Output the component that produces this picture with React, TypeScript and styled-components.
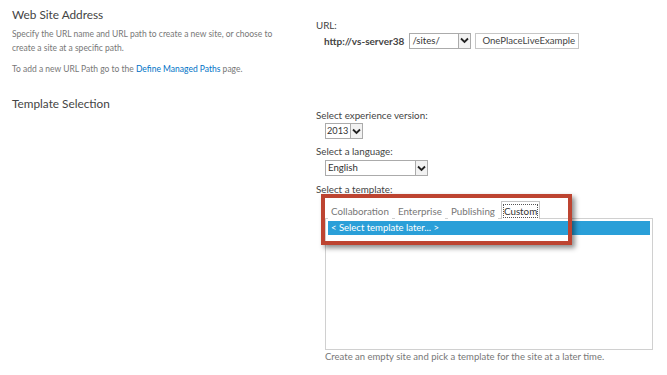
import React from "react";
import styled, { createGlobalStyle } from "styled-components";

const GlobalStyle = createGlobalStyle`
  html, body {
    margin: 0;
    padding: 0;
    background: #ffffff;
  }
  body {
    font-family: Lato, "Open Sans", sans-serif;
    color: #444;
  }
`;

const Chevron: React.FC = () => (
  <svg width="9" height="7" viewBox="0 0 9 7">
    <path d="M1 1.5 L4.5 5 L8 1.5" fill="none" stroke="#222" strokeWidth="1.8" />
  </svg>
);

const App: React.FC = () => {
  return (
    <>
      <GlobalStyle />
      <Page>
        <LeftColumn>
          <SectionTitle>Web Site Address</SectionTitle>
          <Description $top={4}>
            Specify the URL name and URL path to create a new site, or choose to
            <br />
            create a site at a specific path.
          </Description>
          <Description $top={7}>
            To add a new URL Path go to the <Link>Define Managed Paths</Link> page.
          </Description>
          <SectionTitle $top={19}>Template Selection</SectionTitle>
        </LeftColumn>

        <RightColumn>
          <FieldLabel>URL:</FieldLabel>
          <UrlRow>
            <ServerName>http://vs-server38</ServerName>
            <SelectBox $width={62}>
              <SelectText>/sites/</SelectText>
              <ArrowBox>
                <Chevron />
              </ArrowBox>
            </SelectBox>
            <TextInput>OnePlaceLiveExample</TextInput>
          </UrlRow>

          <FieldLabel $top={58}>Select experience version:</FieldLabel>
          <Indented>
            <SelectBox $width={38}>
              <SelectText $tight>2013</SelectText>
              <ArrowBox>
                <Chevron />
              </ArrowBox>
            </SelectBox>
          </Indented>

          <FieldLabel $top={4}>Select a language:</FieldLabel>
          <Indented $top={1}>
            <SelectBox $width={103}>
              <SelectText>English</SelectText>
              <ArrowBox>
                <Chevron />
              </ArrowBox>
            </SelectBox>
          </Indented>

          <FieldLabel $top={5}>Select a template:</FieldLabel>
          <Indented $top={2}>
            <TemplatePicker>
              <TabRow>
                <Tab>Collaboration</Tab>
                <Tab>Enterprise</Tab>
                <Tab>Publishing</Tab>
                <Tab $active>
                  <FocusText>Custom</FocusText>
                </Tab>
              </TabRow>
              <ListBox>
                <ListItem $selected>&lt; Select template later... &gt;</ListItem>
              </ListBox>
              <Highlight />
            </TemplatePicker>
            <Hint>Create an empty site and pick a template for the site at a later time.</Hint>
          </Indented>
        </RightColumn>
      </Page>
    </>
  );
};

const Page = styled.div`
  display: flex;
  width: 667px;
  height: 375px;
  overflow: hidden;
`;

const LeftColumn = styled.div`
  width: 304px;
  padding: 6px 0 0 12px;
  box-sizing: border-box;
  flex: none;
`;

const RightColumn = styled.div`
  flex: 1;
  padding: 17px 0 0 12px;
  display: flex;
  flex-direction: column;
  align-items: flex-start;
`;

const SectionTitle = styled.div<{ $top?: number }>`
  font-size: 11.8px;
  line-height: 17px;
  color: #444;
  margin-top: ${({ $top }) => $top ?? 0}px;
`;

const Description = styled.p<{ $top?: number }>`
  margin: ${({ $top }) => $top ?? 4}px 0 0;
  font-size: 8.5px;
  line-height: 14px;
  color: #777;
  white-space: nowrap;
`;

const Link = styled.span`
  color: #0072c6;
`;

const FieldLabel = styled.div<{ $top?: number }>`
  font-size: 9.8px;
  line-height: 16px;
  color: #444;
  margin-top: ${({ $top }) => $top ?? 0}px;
`;

const UrlRow = styled.div`
  display: flex;
  align-items: center;
  gap: 4px;
  margin: -1px 0 0 8px;
  height: 17px;
`;

const ServerName = styled.span`
  font-size: 10px;
  font-weight: 700;
  color: #444;
  margin-right: 1px;
`;

const Indented = styled.div<{ $top?: number }>`
  margin-left: 9px;
  margin-top: ${({ $top }) => $top ?? 0}px;
`;

const SelectBox = styled.div<{ $width: number }>`
  width: ${({ $width }) => $width}px;
  height: 16px;
  box-sizing: border-box;
  border: 1px solid #ababab;
  display: flex;
  align-items: stretch;
  background: #fff;
`;

const SelectText = styled.span<{ $tight?: boolean }>`
  flex: 1;
  font-size: ${({ $tight }) => ($tight ? 9.2 : 9.6)}px;
  line-height: 14px;
  padding-left: ${({ $tight }) => ($tight ? 1 : 2)}px;
  color: #333;
  white-space: nowrap;
  overflow: hidden;
`;

const ArrowBox = styled.span`
  width: 11px;
  border-left: 1px solid #ababab;
  display: flex;
  align-items: center;
  justify-content: center;
  background: #f2f2f2;
`;

const TextInput = styled.div`
  width: 104px;
  height: 16px;
  box-sizing: border-box;
  border: 1px solid #c6c6c6;
  font-size: 9.6px;
  line-height: 14px;
  padding-left: 6px;
  color: #444;
`;

const TemplatePicker = styled.div`
  position: relative;
  width: 328px;
`;

const TabRow = styled.div`
  display: flex;
  align-items: flex-end;
  height: 19px;
  padding-left: 3px;
`;

const Tab = styled.div<{ $active?: boolean }>`
  font-size: 9.8px;
  line-height: 16px;
  color: ${({ $active }) => ($active ? "#333" : "#777")};
  padding: 1px 2px 0;
  margin-right: ${({ $active }) => ($active ? 0 : 3)}px;
  border: 1px solid ${({ $active }) => ($active ? "#c6c6c6" : "transparent")};
  border-bottom: none;
  background: #fff;
  position: relative;
  top: 1px;
  height: 18px;
  box-sizing: border-box;
`;

const FocusText = styled.span`
  outline: 1px dotted #555;
  outline-offset: 0;
`;

const ListBox = styled.div`
  height: 132px;
  border: 1px solid #d0d0d0;
  box-sizing: border-box;
  padding: 2px 2px;
`;

const ListItem = styled.div<{ $selected?: boolean }>`
  font-size: 9.5px;
  line-height: 14px;
  padding-left: 3px;
  color: ${({ $selected }) => ($selected ? "#fff" : "#444")};
  background: ${({ $selected }) => ($selected ? "#2a9fd8" : "transparent")};
`;

const Highlight = styled.div`
  position: absolute;
  left: -4px;
  top: -5px;
  width: 251px;
  height: 51px;
  box-sizing: border-box;
  border: 4px solid #bd4431;
  box-shadow: 3px 3px 5px rgba(0, 0, 0, 0.45);
  pointer-events: none;
`;

const Hint = styled.div`
  font-size: 9.5px;
  line-height: 13px;
  color: #777;
  margin-top: 0;
`;

export default App;
